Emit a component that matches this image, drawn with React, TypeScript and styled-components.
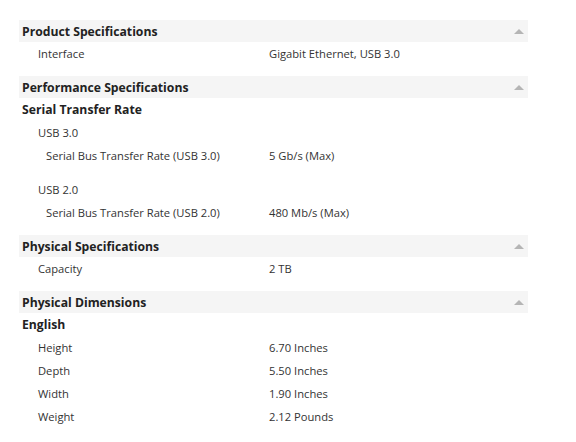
import React from "react";
import styled, { createGlobalStyle } from "styled-components";

const Global = createGlobalStyle`
  html, body { margin: 0; padding: 0; background: #fff; }
  body { font-family: "Open Sans", "DejaVu Sans", sans-serif; color: #333; }
`;

const Page = styled.div`
  padding: 20px 0 0 19px;
  width: 509px;
`;

const Section = styled.section`
  margin-bottom: 11px;
`;

const Header = styled.div`
  display: flex;
  align-items: center;
  justify-content: space-between;
  height: 22px;
  padding: 0 3px;
  background: #f5f5f5;
  font-size: 12.2px;
  font-weight: 700;
  color: #222;
`;

const Arrow = styled.span`
  width: 0;
  height: 0;
  margin-right: 1px;
  border-left: 5px solid transparent;
  border-right: 5px solid transparent;
  border-bottom: 5px solid #b5b5b5;
`;

const SubHeading = styled.div`
  height: 23px;
  display: flex;
  align-items: center;
  padding-left: 3px;
  font-size: 12.2px;
  font-weight: 700;
  color: #222;
`;

const Group = styled.div`
  & + & { margin-top: 11px; }
`;

const GroupLabel = styled.div`
  height: 23px;
  display: flex;
  align-items: center;
  padding-left: 19px;
  font-size: 11.2px;
`;

const Row = styled.div<{ $indent: number }>`
  display: grid;
  grid-template-columns: ${(p) => 250 - p.$indent}px 1fr;
  height: 23px;
  align-items: center;
  padding-left: ${(p) => p.$indent}px;
  font-size: 11.2px;
`;

type Spec = [string, string];

const SpecRow = ({ spec, indent = 19 }: { spec: Spec; indent?: number }) => (
  <Row $indent={indent}>
    <span>{spec[0]}</span>
    <span>{spec[1]}</span>
  </Row>
);

export default function App() {
  return (
    <>
      <Global />
      <Page>
        <Section>
          <Header>
            Product Specifications
            <Arrow />
          </Header>
          <SpecRow spec={["Interface", "Gigabit Ethernet, USB 3.0"]} />
        </Section>
        <Section>
          <Header>
            Performance Specifications
            <Arrow />
          </Header>
          <SubHeading>Serial Transfer Rate</SubHeading>
          <Group>
            <GroupLabel>USB 3.0</GroupLabel>
            <SpecRow indent={27} spec={["Serial Bus Transfer Rate (USB 3.0)", "5 Gb/s (Max)"]} />
          </Group>
          <Group>
            <GroupLabel>USB 2.0</GroupLabel>
            <SpecRow indent={27} spec={["Serial Bus Transfer Rate (USB 2.0)", "480 Mb/s (Max)"]} />
          </Group>
        </Section>
        <Section>
          <Header>
            Physical Specifications
            <Arrow />
          </Header>
          <SpecRow spec={["Capacity", "2 TB"]} />
        </Section>
        <Section>
          <Header>
            Physical Dimensions
            <Arrow />
          </Header>
          <SubHeading>English</SubHeading>
          <SpecRow spec={["Height", "6.70 Inches"]} />
          <SpecRow spec={["Depth", "5.50 Inches"]} />
          <SpecRow spec={["Width", "1.90 Inches"]} />
          <SpecRow spec={["Weight", "2.12 Pounds"]} />
        </Section>
      </Page>
    </>
  );
}
